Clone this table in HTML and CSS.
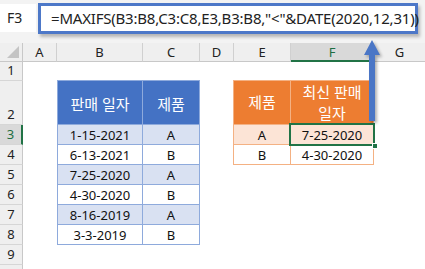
FILE: index.html
```html
<!DOCTYPE html>
<html>
<head>
<meta charset="utf-8">
<link rel="stylesheet" href="styles.css">
</head>
<body>
<div class="app">
  <div class="fbar">
    <div class="namebox">F3</div>
    <div class="formula">=MAXIFS(B3:B8,C3:C8,E3,B3:B8,"&lt;"&amp;DATE(2020,12,31))</div>
  </div>
  <div class="sheet">
    <div class="corner"><span class="tri"></span></div>
    <div class="ch">A</div>
    <div class="ch">B</div>
    <div class="ch">C</div>
    <div class="ch">D</div>
    <div class="ch">E</div>
    <div class="ch sel">F</div>
    <div class="ch last">G</div>

    <div class="rh r1">1</div>
    <div class="rh r2">2</div>
    <div class="rh r3 sel">3</div>
    <div class="rh r4">4</div>
    <div class="rh r5">5</div>
    <div class="rh r6">6</div>
    <div class="rh r7">7</div>
    <div class="rh r8">8</div>
    <div class="rh r9">9</div>
    <div class="rh r10"></div>

    <div class="t1">
      <div class="th">판매 일자</div><div class="th">제품</div>
      <div class="td alt">1-15-2021</div><div class="td alt">A</div>
      <div class="td">6-13-2021</div><div class="td">B</div>
      <div class="td alt">7-25-2020</div><div class="td alt">A</div>
      <div class="td">4-30-2020</div><div class="td">B</div>
      <div class="td alt">8-16-2019</div><div class="td alt">A</div>
      <div class="td">3-3-2019</div><div class="td">B</div>
    </div>

    <div class="t2">
      <div class="oh">제품</div><div class="oh">최신 판매<br>일자</div>
      <div class="od alt">A</div><div class="od alt active">7-25-2020<span class="handle"></span></div>
      <div class="od">B</div><div class="od">4-30-2020</div>
    </div>

    <svg class="arrow" width="24" height="90" viewBox="0 0 24 90">
      <polygon points="12,0 20,15 15,15 15,81 9,81 9,15 4,15" fill="#4a76c6"/>
    </svg>
  </div>
</div>
</body>
</html>
```

FILE: styles.css
```css
* { box-sizing: border-box; }
html, body { margin: 0; padding: 0; background: #fff; }
body { width: 425px; height: 269px; overflow: hidden; font-family: "Noto Sans", "Noto Sans CJK KR", sans-serif; }
.app { width: 425px; height: 269px; position: relative; overflow: hidden; }

.fbar {
  height: 44px;
  background: #f3f3f3;
  display: flex;
  align-items: flex-start;
  padding-top: 3px;
  border-bottom: 1px solid #f3f3f3;
}
.namebox {
  width: 36px;
  height: 28px;
  background: #fff;
  font-size: 14px;
  color: #222;
  line-height: 28px;
  padding-left: 7px;
  margin-top: 1px;
}
.formula {
  margin-left: 2px;
  width: 380px;
  height: 31px;
  border: 3px solid #4d78c8;
  background: #fff;
  box-shadow: 2px 3px 3px rgba(0,0,0,0.25);
  font-size: 15px;
  line-height: 25px;
  color: #222;
  padding-left: 10px;
  white-space: nowrap;
  letter-spacing: -0.2px;
}

.sheet {
  position: relative;
  display: grid;
  grid-template-columns: 23px 34px 86px 57px 34px 57px 83px 51px;
  grid-template-rows: 19px 19px 44px 20px 20px 20px 20px 20px 20px 20px 20px;
  margin-top: -1px;
}
.corner {
  background: #efefef;
  border-right: 1px solid #c8c8c8;
  border-bottom: 1px solid #c8c8c8;
  position: relative;
}
.tri {
  position: absolute; right: 3px; bottom: 3px;
  width: 0; height: 0;
  border-left: 12px solid transparent;
  border-bottom: 12px solid #c4c4c4;
}
.ch {
  background: #efefef;
  border-right: 1px solid #d0d0d0;
  border-bottom: 1px solid #c8c8c8;
  font-size: 13px;
  color: #222;
  text-align: center;
  line-height: 19px;
}
.ch.sel { background: #d9d9d9; color: #1e6e42; border-bottom: 2px solid #217346; }
.ch.last { border-right: none; }
.rh {
  grid-column: 1;
  background: #efefef;
  border-right: 1px solid #c8c8c8;
  border-bottom: 1px solid #d6d6d6;
  font-size: 13px;
  color: #222;
  text-align: center;
  display: flex; align-items: flex-end; justify-content: center;
  padding-bottom: 1px;
}
.rh.sel { background: #d9d9d9; color: #1e6e42; border-right: 2px solid #217346; }
.r1 { grid-row: 2; } .r2 { grid-row: 3; } .r3 { grid-row: 4; } .r4 { grid-row: 5; }
.r5 { grid-row: 6; } .r6 { grid-row: 7; } .r7 { grid-row: 8; } .r8 { grid-row: 9; }
.r9 { grid-row: 10; } .r10 { grid-row: 11; }

.t1 {
  grid-column: 3 / 5;
  grid-row: 3 / 10;
  display: grid;
  grid-template-columns: 85px 57px;
  grid-template-rows: 44px repeat(6, 20px);
  border-left: 1px solid #8eaadc;
  border-top: 1px solid #8eaadc;
  margin-top: -1px;
  height: 165px;
}
.th, .td {
  border-right: 1px solid #8eaadc;
  border-bottom: 1px solid #8eaadc;
  display: flex; align-items: center; justify-content: center;
}
.th { background: #4472c4; color: #fff; font-size: 15px; padding-top: 1px; }
.td { font-size: 13px; color: #111; }
.td.alt { background: #d9e1f2; }

.t2 {
  grid-column: 6 / 8;
  grid-row: 3 / 6;
  display: grid;
  grid-template-columns: 57px 83px;
  grid-template-rows: 44px 20px 20px;
  border-left: 1px solid #f4b183;
  border-top: 1px solid #f4b183;
  margin-top: -1px;
  margin-left: -1px;
  height: 85px;
}
.oh, .od {
  border-right: 1px solid #f4b183;
  border-bottom: 1px solid #f4b183;
  display: flex; align-items: center; justify-content: center;
  text-align: center;
}
.oh { background: #ed7d31; color: #fff; font-size: 15px; line-height: 21px; }
.od { font-size: 13px; color: #111; }
.od.alt { background: #fce4d6; }
.od.active { position: relative; }
.od.active::after {
  content: "";
  position: absolute;
  left: -2px; top: -2px; right: -2px; bottom: -2px;
  border: 2px solid #217346;
}
.handle {
  position: absolute;
  right: -5px; bottom: -5px;
  width: 6px; height: 6px;
  background: #217346;
  border: 1px solid #fff;
  z-index: 2;
}

.arrow {
  position: absolute;
  left: 360px;
  top: -3px;
  filter: drop-shadow(2px 2px 1.5px rgba(0,0,0,0.3));
}
```
